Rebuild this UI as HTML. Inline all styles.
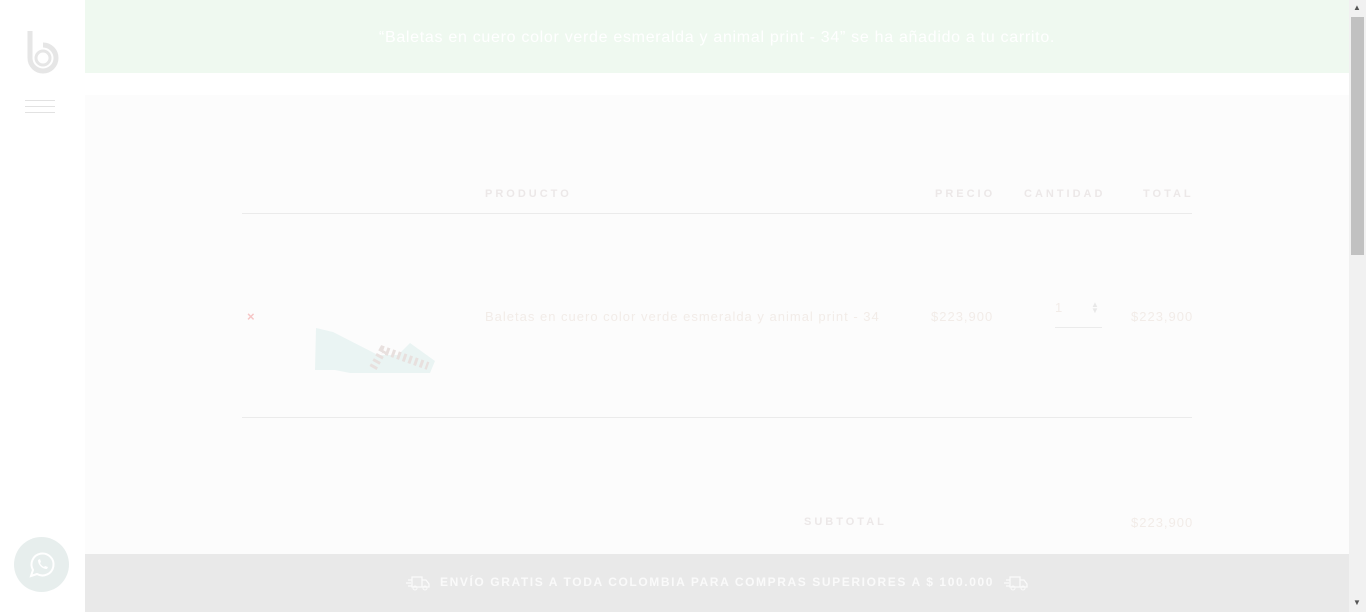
<!DOCTYPE html>
<html><head><meta charset="utf-8"><style>
*{margin:0;padding:0;box-sizing:border-box}
body{width:1366px;height:612px;overflow:hidden;background:#fff;font-family:"Liberation Sans",sans-serif;position:relative}
.side{position:absolute;left:0;top:0;width:85px;height:612px;background:#fff}
.main{position:absolute;left:85px;top:95px;width:1264px;height:460px;background:#fcfcfc}
.notice{position:absolute;left:85px;top:0;width:1264px;height:73px;background:#eff9f0;color:#fff;font-size:16px;letter-spacing:0.7px;text-align:center;line-height:76px}
.t{position:absolute;font-size:11px;letter-spacing:3px;color:#ece8e8;font-weight:bold}
.line{position:absolute;left:242px;width:950px;height:1px;background:#ebebeb}
.v{position:absolute;font-size:13px;color:#f2ece8;letter-spacing:1px}
.foot{position:absolute;left:85px;top:554px;width:1264px;height:58px;background:#e9e9e9;color:#fafafa;font-size:12px;letter-spacing:1.6px;text-align:center;line-height:56px;font-weight:bold}
.foot svg{vertical-align:middle;margin:0 10px}
.sb{position:absolute;left:1349px;top:0;width:17px;height:612px;background:#f1f1f1}
.thumb{position:absolute;left:1351px;top:17px;width:13px;height:238px;background:#c1c1c1}
</style></head><body>
<div class="side">
<svg width="40" height="50" viewBox="0 0 40 50" style="position:absolute;left:24px;top:28px"><path d="M6 3V30a13 13 0 1 0 13-13" fill="none" stroke="#e6e6e6" stroke-width="5"/><circle cx="19" cy="30" r="7" fill="none" stroke="#e6e6e6" stroke-width="3"/></svg>
<div style="position:absolute;left:25px;top:100px;width:30px;height:1px;background:#e2e2e2"></div>
<div style="position:absolute;left:25px;top:106px;width:30px;height:1px;background:#e2e2e2"></div>
<div style="position:absolute;left:25px;top:112px;width:30px;height:1px;background:#e2e2e2"></div>
<div style="position:absolute;left:14px;top:537px;width:55px;height:55px;border-radius:50%;background:#e7eeed"></div>
<svg width="30" height="30" viewBox="0 0 30 30" style="position:absolute;left:27px;top:550px"><path d="M4 26l2-6a11 11 0 1 1 4 4z" fill="none" stroke="#fff" stroke-width="2"/><path d="M11 10c0 5 4 9 9 9l1-2-3-1-1 1c-2-1-3-2-4-4l1-1-1-3z" fill="#fff"/></svg>
</div>
<div class="main"></div>
<div class="notice">“Baletas en cuero color verde esmeralda y animal print - 34” se ha añadido a tu carrito.</div>
<div class="t" style="left:485px;top:188px">PRODUCTO</div>
<div class="t" style="left:935px;top:188px">PRECIO</div>
<div class="t" style="left:1024px;top:188px">CANTIDAD</div>
<div class="t" style="left:1143px;top:188px">TOTAL</div>
<div class="line" style="top:213px"></div>
<div class="line" style="top:417px"></div>
<div style="position:absolute;left:247px;top:309px;color:#f6c6c6;font-size:13px;font-weight:bold">×</div>
<svg width="125" height="50" style="position:absolute;left:313px;top:326px"><path d="M3 2L2 44h20l15 3h80l5-12-25-18-12 12-20 0L20 6z" fill="#eaf4f3"/><path d="M60 42l10-18 45 16" fill="none" stroke="#e8e0de" stroke-width="8" stroke-dasharray="3 3"/></svg>
<div class="v" style="left:485px;top:309px">Baletas en cuero color verde esmeralda y animal print - 34</div>
<div class="v" style="left:931px;top:309px">$223,900</div>
<div class="v" style="left:1055px;top:300px">1</div>
<div style="position:absolute;left:1091px;top:302px;color:#e8e8e8;font-size:8px;line-height:6px">▲<br>▼</div>
<div style="position:absolute;left:1055px;top:327px;width:47px;height:1px;background:#ebebeb"></div>
<div class="v" style="left:1131px;top:309px">$223,900</div>
<div class="t" style="left:804px;top:516px">SUBTOTAL</div>
<div class="v" style="left:1131px;top:515px">$223,900</div>
<div class="foot"><svg width="24" height="16" viewBox="0 0 24 16"><path d="M6 2h10v10H6zM16 5h4l3 4v3h-7M2 5h4M0 8h5M2 11h4" fill="none" stroke="#fafafa" stroke-width="1.3"/><circle cx="9" cy="13" r="2" fill="none" stroke="#fafafa"/><circle cx="19" cy="13" r="2" fill="none" stroke="#fafafa"/></svg>ENVÍO GRATIS A TODA COLOMBIA PARA COMPRAS SUPERIORES A $ 100.000<svg width="24" height="16" viewBox="0 0 24 16"><path d="M6 2h10v10H6zM16 5h4l3 4v3h-7M2 5h4M0 8h5M2 11h4" fill="none" stroke="#fafafa" stroke-width="1.3"/><circle cx="9" cy="13" r="2" fill="none" stroke="#fafafa"/><circle cx="19" cy="13" r="2" fill="none" stroke="#fafafa"/></svg></div>
<div class="sb"></div><div class="thumb"></div>
<div style="position:absolute;left:1353px;top:3px;font-size:8px;color:#555">▲</div>
<div style="position:absolute;left:1353px;top:598px;font-size:8px;color:#555">▼</div>
</body></html>
